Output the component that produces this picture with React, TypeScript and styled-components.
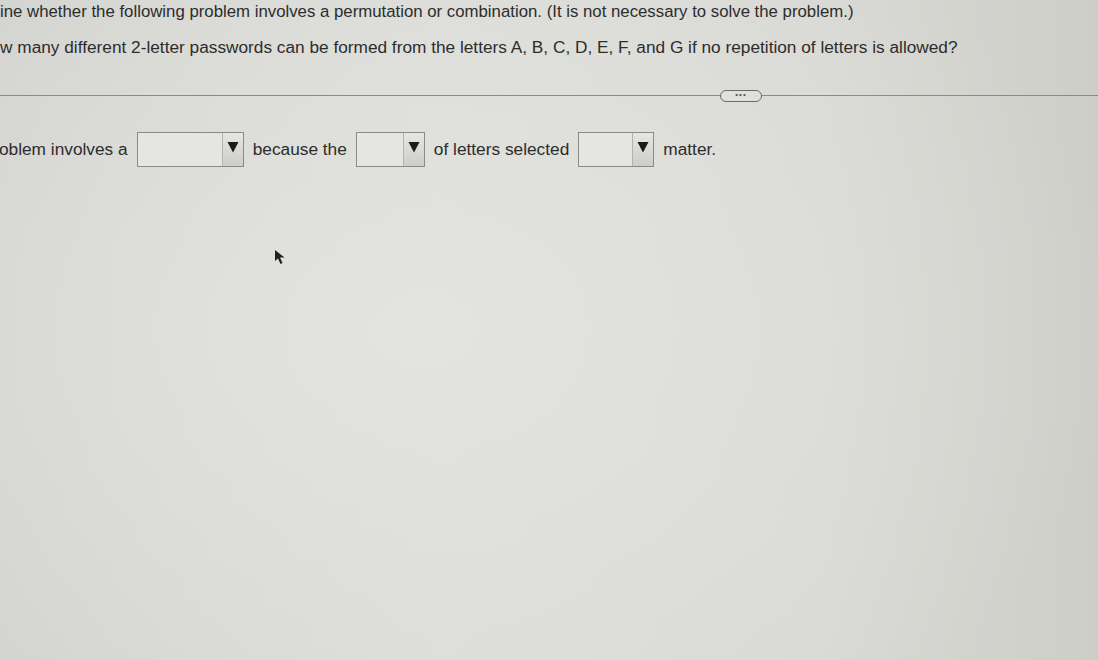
import React from "react";
import styled, { createGlobalStyle } from "styled-components";

const Global = createGlobalStyle`
  html, body { margin: 0; padding: 0; }
  body {
    width: 1098px; height: 660px; overflow: hidden;
    font-family: "Liberation Sans", Arial, sans-serif;
    background:
      radial-gradient(ellipse 700px 500px at 420px 330px, #e3e3df 0%, rgba(227,227,223,0) 100%),
      linear-gradient(90deg, #d2d3cf 0%, #dbdbd7 40%, #d8d9d4 75%, #cdcec8 100%);
    color: #2e2e2e;
  }
`;

const Page = styled.div`
  position: relative;
  width: 1098px;
  height: 660px;
  overflow: hidden;
  display: flex;
  flex-direction: column;
`;

const Line = styled.div<{ $indent: number; $top: number; $size: number }>`
  margin-left: ${(p) => p.$indent}px;
  margin-top: ${(p) => p.$top}px;
  font-size: ${(p) => p.$size}px;
  line-height: 20px;
  white-space: nowrap;
  color: #2d2d2d;
`;

const Divider = styled.div`
  margin-top: 38px;
  height: 1px;
  background: #8a8a86;
  display: flex;
  align-items: center;
  padding-left: 720px;
`;

const Pill = styled.div`
  width: 40px;
  height: 10px;
  border: 1px solid #6a6a66;
  border-radius: 6px;
  background: #e0e0dc;
  font-size: 8px;
  line-height: 8px;
  text-align: center;
  color: #555;
  letter-spacing: 1px;
`;

const Row = styled.div`
  margin-top: 36px;
  margin-left: -51px;
  display: flex;
  align-items: center;
  gap: 9px;
  font-size: 17.3px;
  white-space: nowrap;
  color: #2d2d2d;
`;

const Select = styled.div<{ $w: number }>`
  width: ${(p) => p.$w}px;
  height: 35px;
  border: 1px solid #8a8a86;
  background: #e5e5e1;
  display: flex;
  justify-content: flex-end;
  box-sizing: border-box;
`;

const Arrow = styled.div`
  width: 21px;
  height: 100%;
  border-left: 1px solid #b2b2ae;
  background: linear-gradient(180deg, #e6e6e2 0%, #cdcdc9 100%);
  display: flex;
  align-items: flex-start;
  justify-content: center;
  padding-top: 8px;
  box-sizing: border-box;
`;

const Cursor = styled.svg`
  position: absolute;
  left: 274px;
  top: 249px;
`;

const Triangle = () => (
  <svg width="12" height="12" viewBox="0 0 12 12">
    <polygon points="0.5,1 11.5,1 6,11.5" fill="#1a1a1a" />
  </svg>
);

const Dropdown = ({ w }: { w: number }) => (
  <Select $w={w}>
    <Arrow>
      <Triangle />
    </Arrow>
  </Select>
);

export default function App() {
  return (
    <Page>
      <Global />
      <Line $indent={-55} $top={2} $size={16.8}>
        Determine whether the following problem involves a permutation or combination. (It is not necessary to solve the problem.)
      </Line>
      <Line $indent={-22} $top={15} $size={17.25}>
        How many different 2-letter passwords can be formed from the letters A, B, C, D, E, F, and G if no repetition of letters is allowed?
      </Line>
      <Divider>
        <Pill>•••</Pill>
      </Divider>
      <Row>
        <span>The problem involves a</span>
        <Dropdown w={107} />
        <span>because the</span>
        <Dropdown w={69} />
        <span>of letters selected</span>
        <Dropdown w={76} />
        <span>matter.</span>
      </Row>
      <Cursor width="14" height="18" viewBox="0 0 14 18">
        <polygon points="1,1 1,12 4,9.5 6.5,15 8.5,14 6,8.5 10.5,8.5" fill="#1d2420" />
      </Cursor>
    </Page>
  );
}
